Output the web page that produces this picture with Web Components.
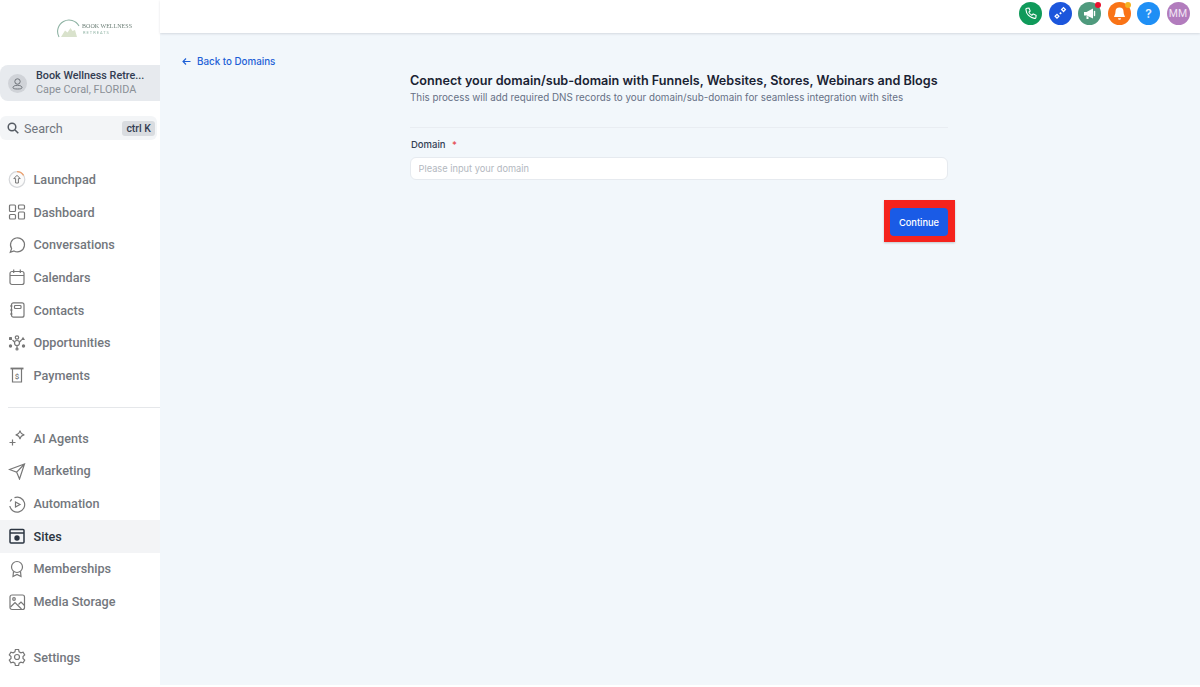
<!DOCTYPE html>
<html>
<head>
<meta charset="utf-8">
<title>Add domain</title>
<style>
  html, body { margin: 0; height: 100%; background: #fff; overflow: hidden; }
</style>
</head>
<body>
<app-shell>
  <side-bar slot="side">
    <nav-item icon="launchpad">Launchpad</nav-item>
    <nav-item icon="dashboard">Dashboard</nav-item>
    <nav-item icon="conversations">Conversations</nav-item>
    <nav-item icon="calendars">Calendars</nav-item>
    <nav-item icon="contacts">Contacts</nav-item>
    <nav-item icon="opportunities">Opportunities</nav-item>
    <nav-item icon="payments">Payments</nav-item>
    <nav-item slot="second" icon="agents">AI Agents</nav-item>
    <nav-item slot="second" icon="marketing">Marketing</nav-item>
    <nav-item slot="second" icon="automation">Automation</nav-item>
    <nav-item slot="second" icon="sites" active>Sites</nav-item>
    <nav-item slot="second" icon="memberships">Memberships</nav-item>
    <nav-item slot="second" icon="media">Media Storage</nav-item>
    <nav-item slot="bottom" icon="settings">Settings</nav-item>
  </side-bar>
  <top-bar slot="top">
    <round-btn color="#0f9a5a" icon="phone"></round-btn>
    <round-btn color="#1c56dc" icon="spark"></round-btn>
    <round-btn color="#4f9a7d" icon="megaphone" dot="#e8112d"></round-btn>
    <round-btn color="#f97316" icon="bell" dot="#f5b323"></round-btn>
    <round-btn color="#1f8ff5" icon="help"></round-btn>
    <round-btn color="#b27cbd">MM</round-btn>
  </top-bar>
  <domain-page></domain-page>
</app-shell>

<script>
const ICONS = {
  launchpad: '<circle cx="9" cy="9.5" r="7.8" stroke="#d5d7da" fill="#fbfbfb"/><path d="M9 1.7a7.8 7.8 0 0 1 6.6 3.7" stroke="#f0a06a" stroke-width="1.2"/><path d="M9 5.3 5.8 8.6h1.8V13h2.800V8.600h1.800z" stroke="#777" stroke-width="1"/>',
  dashboard: '<rect x="1.500" y="2" width="6" height="6.500" rx="1"/><rect x="10.500" y="2" width="6" height="4" rx="1"/><rect x="1.500" y="11.500" width="6" height="4.500" rx="1"/><rect x="10.500" y="9" width="6" height="7" rx="1"/>',
  conversations: '<path d="M2.300 16.300 3.600 12.600A7 7 0 1 1 6 14.900z"/>',
  calendars: '<rect x="2" y="3.500" width="14" height="13" rx="2"/><path d="M2 7.500h14M5.700 1.500v3.500M12.300 1.500v3.500"/>',
  contacts: '<rect x="3.500" y="1.800" width="12.500" height="14.400" rx="2"/><rect x="6.500" y="4.500" width="6.500" height="3" rx=".8"/><path d="M2 5h2.500M2 9h2.500M2 13h2.500"/>',
  opportunities: '<circle cx="9" cy="3.500" r="1.700"/><path d="M6.500 9a2.500 2.500 0 0 1 5 0 2.500 2.500 0 0 1-5 0zM9 12v2.500"/><circle cx="9" cy="15" r="1"/><g fill="#777" stroke="none"><rect x="1" y="3" width="3" height="3" rx=".6"/><path d="M15 2.800 17 6h-4z"/><circle cx="2.500" cy="12" r="1.700"/><circle cx="15.500" cy="12" r="1.700"/></g><path d="M4.500 6 6.500 8M13.500 6 11.500 8"/>',
  payments: '<path d="M4.500 2.500v13.500h9V2.500"/><path d="M2.500 2.500h13" stroke-width="1.800"/><text x="9" y="12.600" font-size="8" font-family="Roboto, sans-serif" text-anchor="middle" fill="#777" stroke="none">$</text>',
  agents: '<path d="M12 1.500c.5 2.700 1.600 3.800 4.300 4.300-2.700.5-3.800 1.600-4.300 4.300-.5-2.700-1.600-3.800-4.300-4.300 2.700-.5 3.800-1.600 4.300-4.300z"/><path d="M4.500 10.500v6M1.500 13.500h6"/>',
  marketing: '<path d="M1.500 7.500 16.500 2l-5 15-2.800-6.800zM8.700 10.200 16.500 2"/>',
  automation: '<path d="M6.500 2.600A7.500 7.500 0 1 1 1.800 11M2.200 6.500A7.500 7.500 0 0 1 3.800 4.200"/><path d="M7.500 7 12 9.500l-4.500 2.500z"/>',
  sites: '<rect x="2" y="2.500" width="14" height="13.500" rx="1" stroke="#2b3441" stroke-width="1.500"/><path d="M2 6h14" stroke="#2b3441" stroke-width="1.500"/><circle cx="9" cy="11" r="2.700" fill="#2b3441" stroke="none"/>',
  memberships: '<circle cx="9" cy="7" r="5.500"/><path d="M5.500 11.500 5 16.500l4-2 4 2-.5-5"/>',
  media: '<rect x="2" y="2" width="14.500" height="14.500" rx="2"/><circle cx="6" cy="6" r="1.300"/><path d="M2.500 14 7 9.500l6.500 6.500M10.500 11.500 13 9l3.500 3.500"/>',
  settings: '<path d="M7.400 1.500h3.200l.5 2.300 1.800 1 2.200-.7 1.600 2.800-1.700 1.600v2l1.700 1.600-1.600 2.800-2.200-.7-1.800 1-.5 2.300H7.400l-.5-2.300-1.800-1-2.200.7-1.600-2.800 1.700-1.600v-2L1.300 6.900l1.600-2.800 2.200.7 1.800-1z"/><circle cx="9" cy="9" r="2.500"/>'
};

const BTN_ICONS = {
  phone: '<path d="M5 3.200 7 3l1.200 3-1.300 1.100c.6 1.400 1.600 2.500 3 3.200L11.100 9l3 1.300-.2 2.100c-.1.700-.7 1.100-1.400 1C7.800 12.800 4.200 9.200 3.900 4.500c-.1-.7.400-1.200 1.100-1.300z" fill="none" stroke="#fff" stroke-width="1.100"/>',
  spark: '<g fill="#fff"><path d="M11.500 1.800 14.300 4.600 11.500 7.400 8.700 4.600zM11.500 3.600 10.500 4.600 11.500 5.600 12.500 4.600z" fill-rule="evenodd"/><path d="M8.500 7 9.800 8.300 8.500 9.600 7.200 8.300z"/><path d="M5 8.500 7.800 11.300 5 14.100 2.200 11.300zM5 10.300 4 11.300 5 12.300 6 11.300z" fill-rule="evenodd"/></g>',
  megaphone: '<path d="M3 7v3.500h2.500l6.500 3V3.500L5.500 7z" fill="#fff"/><path d="M5.500 11v3h2v-2.200" fill="#fff"/><path d="M13.500 6.500v4" stroke="#fff" stroke-width="1.400" stroke-linecap="round"/>',
  bell: '<path d="M8.500 2.500A4 4 0 0 0 4.500 6.500c0 3-1.500 4.500-1.500 5.500h11c0-1-1.500-2.500-1.500-5.500a4 4 0 0 0-4-4z" fill="#fff"/><path d="M7 13.200h3a1.500 1.500 0 0 1-3 0z" fill="#fff"/>',
  help: '<text x="8.500" y="13" font-size="12" font-weight="600" font-family="Inter, sans-serif" text-anchor="middle" fill="#e4f0ff">?</text>'
};

class AppShell extends HTMLElement {
  constructor() {
    super();
    this.attachShadow({ mode: "open" }).innerHTML = `
      <style>
        :host { display: grid; grid-template-columns: 160px 1fr; grid-template-rows: 33px 1fr; height: 687px; background: #fff; }
        .side { grid-row: 1 / 3; }
        .main { background: #f2f7fb; margin-bottom: 2px; min-height: 0; }
      </style>
      <div class="side"><slot name="side"></slot></div>
      <slot name="top"></slot>
      <div class="main"><slot></slot></div>
    `;
  }
}

class SideBar extends HTMLElement {
  constructor() {
    super();
    this.attachShadow({ mode: "open" }).innerHTML = `
      <style>
        :host { display: block; height: 100%; background: #fff; font-family: Roboto, "Liberation Sans", sans-serif; }
        .logo { height: 65px; padding-left: 57px; box-sizing: border-box; padding-top: 18px; filter: blur(.5px); }
        .logo svg { display: block; }
        .loc { height: 36px; margin-bottom: 15px; display: flex; align-items: center; gap: 9px; padding-left: 8px; background: #e7eaee; border-radius: 8px 0 0 8px; }
        .avatar { width: 19px; height: 19px; flex: none; border-radius: 50%; background: #d0d3d8; display: flex; align-items: center; justify-content: center; }
        .loc b { display: block; font-size: 10.800px; line-height: 14px; font-weight: 500; color: #333d52; white-space: nowrap; }
        .loc span { display: block; font-size: 10.850px; line-height: 14px; color: #8b9097; white-space: nowrap; }
        .search { height: 24px; width: 157px; margin-bottom: 23px; display: flex; align-items: center; gap: 5px; padding: 0 2px 0 7px; box-sizing: border-box; background: #f3f5f7; border-radius: 6px; font-size: 12.600px; color: #71767d; }
        .search kbd { margin-left: auto; padding: 0 4px; height: 15px; background: #d9dce0; border-radius: 3px; font: 500 10.500px/15px Roboto, sans-serif; color: #333d52; }
        hr { height: 1px; border: 0; margin: 15px 0 14px 8px; background: #e5e7ea; }
        .foot { margin-top: 23px; }
      </style>
      <div class="logo">
        <svg width="76" height="22" viewBox="0 0 76 22" fill="none">
          <path d="M2 19A10.500 10.500 0 0 1 22 8" stroke="#8fb3a4" stroke-width="1.100"/>
          <path d="M4 19 8 12.500l2.500 2 3-4.500 2 3 2.500-1 2 7z" fill="#d9e2cc"/>
          <text x="25" y="10" font-family="'Liberation Serif', serif" font-size="6" textLength="50" lengthAdjust="spacingAndGlyphs" fill="#6f8179">BOOK WELLNESS</text>
          <text x="26" y="16" font-family="Roboto, sans-serif" font-size="4" letter-spacing="1" fill="#8fb3a4">RETREATS</text>
        </svg>
      </div>
      <div class="loc">
        <div class="avatar"><svg width="13" height="13" viewBox="0 0 13 13" fill="none" stroke="#6d7278" stroke-width="1"><circle cx="6.500" cy="4.500" r="2.700"/><path d="M2 10.500c0-1.300 2-2.200 4.500-2.200s4.500.9 4.500 2.200-2 1.500-4.500 1.500-4.500-.2-4.500-1.500z"/></svg></div>
        <div><b>Book Wellness Retre...</b><span>Cape Coral, FLORIDA</span></div>
      </div>
      <div class="search">
        <svg width="12" height="12" viewBox="0 0 12 12" fill="none" stroke="#555b63" stroke-width="1.500"><circle cx="5" cy="5" r="3.800"/><path d="M8 8l3.300 3.300"/></svg>
        Search
        <kbd>ctrl K</kbd>
      </div>
      <slot></slot>
      <hr>
      <slot name="second"></slot>
      <div class="foot"><slot name="bottom"></slot></div>
    `;
  }
}

class NavItem extends HTMLElement {
  constructor() {
    super();
    this.attachShadow({ mode: "open" }).innerHTML = `
      <style>
        :host { display: flex; align-items: center; gap: 7.500px; height: 32.700px; padding-left: 8px; font-size: 12.650px; font-weight: 500; color: #73777d; }
        :host([active]) { background: #f3f4f6; color: #2b3441; }
        svg { flex: none; display: block; }
      </style>
      <svg width="18" height="18" viewBox="0 0 18 18" fill="none" stroke="#777" stroke-width="1.200"></svg>
      <slot></slot>
    `;
  }
  connectedCallback() {
    this.shadowRoot.querySelector("svg").innerHTML = ICONS[this.getAttribute("icon")] || "";
  }
}

class TopBar extends HTMLElement {
  constructor() {
    super();
    this.attachShadow({ mode: "open" }).innerHTML = `
      <style>
        :host { display: flex; align-items: center; justify-content: flex-end; gap: 6.500px; padding: 0 10.500px 6px 0; box-sizing: border-box; height: 33px; background: #fff; box-shadow: 0 1px 2px rgba(60, 70, 90, .16); position: relative; z-index: 1; }
      </style>
      <slot></slot>
    `;
  }
}

class RoundBtn extends HTMLElement {
  constructor() {
    super();
    this.attachShadow({ mode: "open" }).innerHTML = `
      <style>
        :host { display: flex; align-items: center; justify-content: center; position: relative; width: 23px; height: 23px; border-radius: 50%; font: 400 10.500px Roboto, sans-serif; color: #f1e4f4; }
        .dot { position: absolute; top: 0; right: 0; width: 6px; height: 6px; border-radius: 50%; }
        svg { display: block; }
      </style>
      <slot></slot>
    `;
  }
  connectedCallback() {
    this.style.background = this.getAttribute("color");
    const icon = this.getAttribute("icon");
    if (icon) {
      this.shadowRoot.innerHTML += `<svg width="17" height="17" viewBox="0 0 17 17">${BTN_ICONS[icon]}</svg>`;
    }
    const dot = this.getAttribute("dot");
    if (dot) {
      this.shadowRoot.innerHTML += `<span class="dot" style="background:${dot}"></span>`;
    }
  }
}

class DomainPage extends HTMLElement {
  constructor() {
    super();
    this.attachShadow({ mode: "open" }).innerHTML = `
      <style>
        :host { display: block; padding-top: 21px; font-family: Inter, "Liberation Sans", sans-serif; }
        .back { display: flex; align-items: center; gap: 6px; height: 14px; margin-left: 22px; font-size: 9.800px; font-weight: 500; color: #1d5fd6; }
        .form { width: 538px; margin: 3px 0 0 250px; }
        h1 { margin: 0; font-size: 12.630px; line-height: 20px; font-weight: 600; color: #1a2333; white-space: nowrap; }
        p { margin: 0; font-size: 9.820px; line-height: 12px; color: #667085; white-space: nowrap; }
        hr { height: 1px; border: 0; margin: 24px 0 10px; background: #e9edf2; }
        label { display: block; font-size: 9.500px; line-height: 14px; font-weight: 500; color: #344054; margin: 0 0 5px 1px; }
        label i { font-style: normal; color: #e5484d; margin-left: 4px; }
        input { display: block; width: 100%; height: 23px; box-sizing: border-box; padding: 0 7.500px; border: 1px solid #e6eaef; border-radius: 6px; background: #fff; font: 9.250px Inter, sans-serif; outline: 0; }
        input::placeholder { color: #b3b8c0; opacity: 1; }
        .actions { display: flex; justify-content: flex-end; margin: 20px -7px 0 0; }
        .mark { border: solid #f5231d; border-width: 8px 7px 6px 6px; background: #f5231d; box-shadow: 0 1px 2px rgba(0, 0, 0, .2); }
        button { display: block; width: 58px; height: 28px; padding: 0; border: 0; border-radius: 4px; background: #1a5be6; color: #fff; font: 500 9.300px Inter, sans-serif; }
      </style>
      <div class="back">
        <svg width="9" height="9" viewBox="0 0 9 9" fill="none" stroke="#1d5fd6" stroke-width="1.100"><path d="M8.500 4.500H1M4 1.500l-3 3 3 3"/></svg>
        Back to Domains
      </div>
      <div class="form">
        <h1>Connect your domain/sub-domain with Funnels, Websites, Stores, Webinars and Blogs</h1>
        <p>This process will add required DNS records to your domain/sub-domain for seamless integration with sites</p>
        <hr>
        <label>Domain <i>*</i></label>
        <input type="text" placeholder="Please input your domain">
        <div class="actions"><div class="mark"><button>Continue</button></div></div>
      </div>
    `;
  }
}

customElements.define("app-shell", AppShell);
customElements.define("side-bar", SideBar);
customElements.define("nav-item", NavItem);
customElements.define("top-bar", TopBar);
customElements.define("round-btn", RoundBtn);
customElements.define("domain-page", DomainPage);
</script>
</body>
</html>
